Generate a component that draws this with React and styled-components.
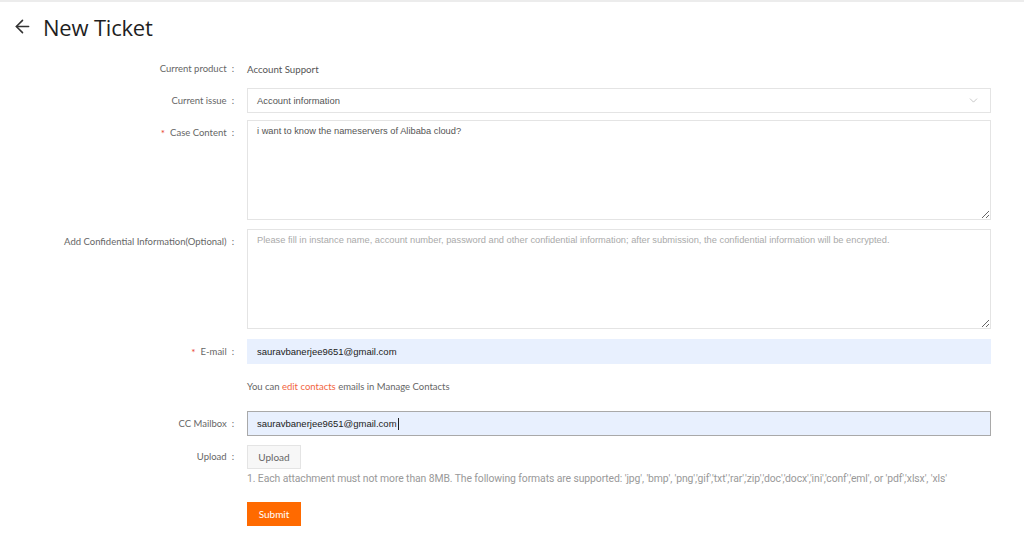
import React from 'react'
import styled, { createGlobalStyle } from 'styled-components'
import { ArrowLeft, ChevronDown } from 'lucide-react'

const Global = createGlobalStyle`
body{margin:0;background:#fff;font-family:"Liberation Sans",Arial,sans-serif;}
*{box-sizing:border-box;}
`

export default function App(){
    return(
        <Page>
            <Global/>
            <TopLine/>
            <Header>
                <BackButton><ArrowLeft size={21} strokeWidth={1.8}/></BackButton>
                <Title>New Ticket</Title>
            </Header>
            <Form>
                <Row top={8} height={25}>
                    <Label>Current product<Colon>:</Colon></Label>
                    <PlainValue>Account Support</PlainValue>
                </Row>
                <Row top={7} height={25}>
                    <Label>Current issue<Colon>:</Colon></Label>
                    <Select>
                        <span>Account information</span>
                        <ChevronDown size={13} strokeWidth={1} color="#999"/>
                    </Select>
                </Row>
                <Row top={7} height={100}>
                    <Label required>Case Content<Colon>:</Colon></Label>
                    <Area defaultValue="i want to know the nameservers of Alibaba cloud?"/>
                </Row>
                <Row top={9} height={100}>
                    <Label>Add Confidential Information(Optional)<Colon>:</Colon></Label>
                    <Area placeholder="Please fill in instance name, account number, password and other confidential information; after submission, the confidential information will be encrypted."/>
                </Row>
                <Row top={10} height={25} center>
                    <Label required>E-mail<Colon>:</Colon></Label>
                    <Field>sauravbanerjee9651@gmail.com</Field>
                </Row>
                <Row top={12} height={20} center>
                    <span/>
                    <Hint>You can <Link>edit contacts</Link> emails in Manage Contacts</Hint>
                </Row>
                <Row top={15} height={25} center>
                    <Label>CC Mailbox<Colon>:</Colon></Label>
                    <Field focused>sauravbanerjee9651@gmail.com<Caret/></Field>
                </Row>
                <Row top={8} height={24} center>
                    <Label>Upload<Colon>:</Colon></Label>
                    <Button>Upload</Button>
                </Row>
                <Row top={2} height={16} center>
                    <span/>
                    <Note>1. Each attachment must not more than 8MB. The following formats are supported: 'jpg', 'bmp', 'png','gif','txt','rar','zip','doc','docx','ini','conf','eml', or 'pdf','xlsx', 'xls'</Note>
                </Row>
                <Row top={16} height={24} center>
                    <span/>
                    <Button primary>Submit</Button>
                </Row>
            </Form>
        </Page>
    )
}

const Page=styled.div`
width:1024px;height:538px;overflow:hidden;background:#fff;
display:flex;flex-direction:column;
`
const TopLine=styled.div`
height:2px;background:#ececec;flex-shrink:0;
`
const Header=styled.header`
display:flex;align-items:center;height:46px;padding:3px 0 0 10px;
`
const BackButton=styled.button`
display:flex;align-items:center;justify-content:center;
background:none;border:0;padding:0;color:#333;width:24px;height:24px;
`
const Title=styled.h1`
margin:0 0 0 9px;font-family:"Open Sans","Noto Sans",sans-serif;
font-size:22px;font-weight:500;color:#1f1f1f;letter-spacing:-0.2px;
`
const Form=styled.section`
display:flex;flex-direction:column;
`
const Row=styled.div`
display:grid;grid-template-columns:247px 744px;
margin-top:${p=>p.top}px;height:${p=>p.height}px;
align-items:${p=>p.center?'center':'start'};
`
const Label=styled.label`
display:flex;justify-content:flex-end;align-items:center;height:25px;
padding-right:13px;font-family:Lato,"Noto Sans",sans-serif;
font-size:9.5px;color:#666;white-space:nowrap;
${p=>p.required?`&::before{content:"*";color:#e8402e;margin-right:5px;font-size:10px;}`:''}
`
const Colon=styled.span`margin-left:5px;`
const PlainValue=styled.div`
display:flex;align-items:center;height:25px;
font-family:Lato,"Noto Sans",sans-serif;font-size:9.7px;color:#555;
`
const Select=styled.div`
display:flex;justify-content:space-between;align-items:center;
height:25px;border:1px solid #e4e4e4;padding:0 10px 0 9px;
font-size:9.4px;color:#555;
`
const Area=styled.textarea`
width:100%;height:100px;border:1px solid #e4e4e4;padding:5px 9px;
font-family:"Liberation Sans",Arial,sans-serif;font-size:9.3px;color:#555;
resize:vertical;outline:none;
&::placeholder{color:#aaa;}
`
const Field=styled.div`
display:flex;align-items:center;height:25px;padding:0 9px;
background:#e8f0fe;border:1px solid ${p=>p.focused?'#a9a9a9':'#e8f0fe'};
font-size:9.5px;color:#222;
`
const Caret=styled.span`
display:inline-block;width:1px;height:12px;background:#222;margin-left:1px;
`
const Hint=styled.div`
font-family:Lato,"Noto Sans",sans-serif;font-size:9.5px;color:#666;
`
const Link=styled.span`color:#f2643d;`
const Button=styled.button`
width:54px;height:24px;border-radius:0;
font-family:Lato,"Liberation Sans",sans-serif;font-size:10px;
background:${p=>p.primary?'#ff6a00':'#f7f7f7'};
color:${p=>p.primary?'#fff':'#666'};
border:1px solid ${p=>p.primary?'#ff6a00':'#e4e4e4'};
`
const Note=styled.div`
font-family:"Roboto","Liberation Sans",sans-serif;font-size:10.4px;color:#999;
white-space:nowrap;letter-spacing:-0.1px;
`
